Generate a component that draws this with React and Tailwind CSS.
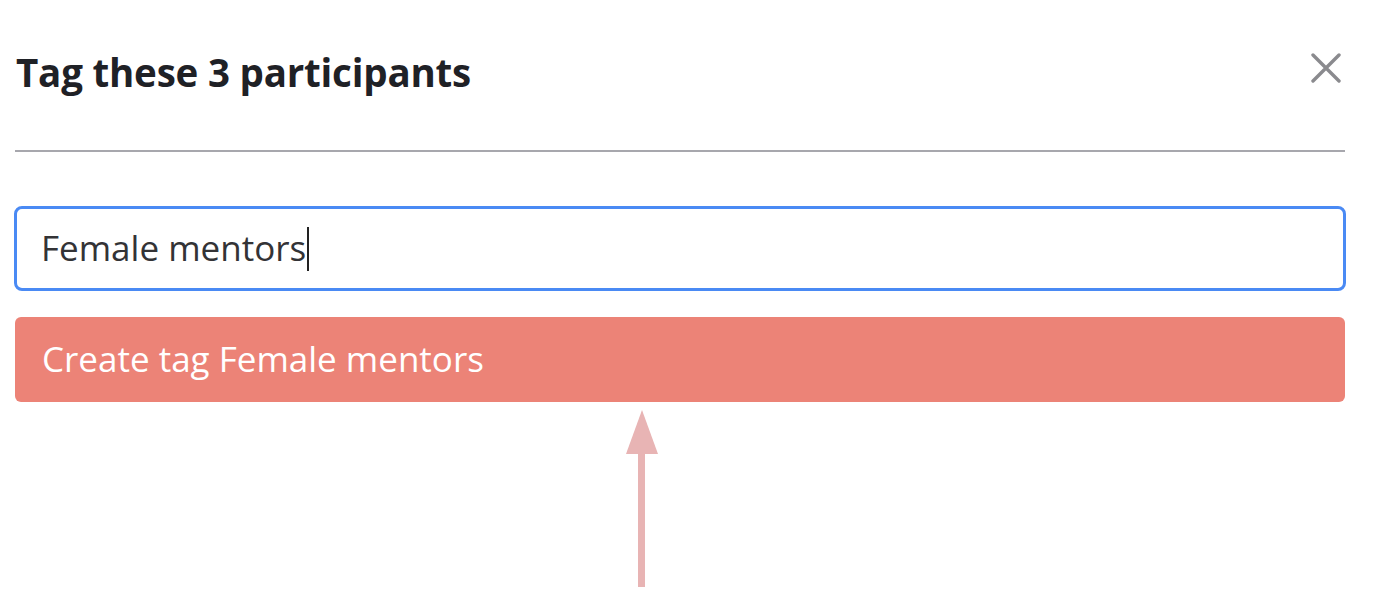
import React from "react";

export default function App() {
  return (
    <div className="w-[1376px] h-[602px] bg-white overflow-hidden" style={{ fontFamily: '"Open Sans", sans-serif' }}>
      <div className="ml-[15px] w-[1330px]">
        {/* Header */}
        <div className="flex items-start justify-between h-[152px] pt-[50px] border-b-2 border-[#a7a7ad]">
          <h1 className="text-[38.5px] leading-[44px] font-bold text-[#1f2126] ml-[1px] tracking-[-0.2px]">
            Tag these 3 participants
          </h1>
          <button className="w-[30px] h-[30px] mr-[4px] mt-[3px] flex items-center justify-center">
            <svg width="30" height="30" viewBox="0 0 30 30">
              <path d="M2 2 L28 28 M28 2 L2 28" stroke="#8a8a8e" strokeWidth="3.4" strokeLinecap="round" />
            </svg>
          </button>
        </div>

        {/* Input */}
        <div className="mt-[54px] ml-[-1px] w-[1332px] h-[85px] rounded-[8px] border-[3px] border-[#4a8af4] flex items-center pl-[24px]">
          <span className="text-[35px] text-[#333336]">Female mentors</span>
          <span className="w-[2px] h-[44px] bg-[#222] ml-[1px]"></span>
        </div>

        {/* Create tag */}
        <div className="mt-[26px] h-[85px] rounded-[6px] bg-[#ec8377] flex items-center pl-[27px]">
          <span className="text-[35px] text-white">Create tag Female mentors</span>
        </div>

        {/* Annotation arrow */}
        <div className="ml-[610px] mt-[8px]">
          <svg width="34" height="178" viewBox="0 0 34 178">
            <polygon points="17,0 33,44 1,44" fill="#e8b4b4" />
            <rect x="13" y="43" width="7" height="134" fill="#e8b4b4" />
          </svg>
        </div>
      </div>
    </div>
  );
}
